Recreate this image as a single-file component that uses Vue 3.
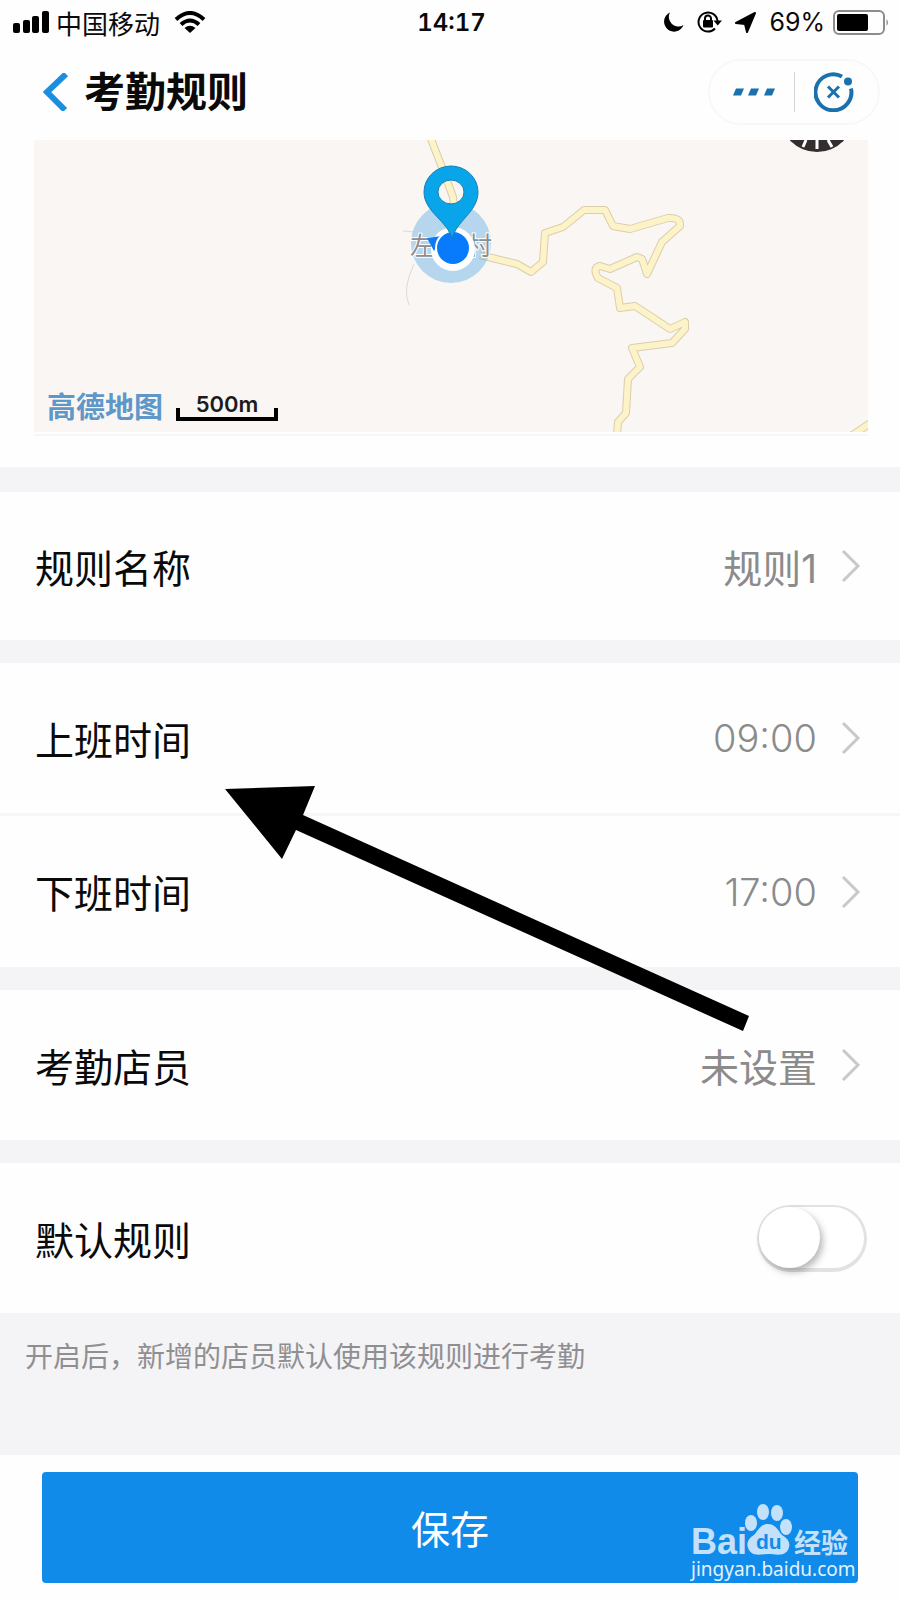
<script setup>
import { ref } from 'vue'

const isDefault = ref(false)
const groups = [
  [{ label: '规则名称', value: '规则1' }],
  [{ label: '上班时间', value: '09:00', time: true }, { label: '下班时间', value: '17:00', time: true }],
  [{ label: '考勤店员', value: '未设置' }],
]
const road =
  'M480 255 L517 264 L531 272 L543 262 L545 233 L563 227 L584 210 L605 210 L613 226 L630 229 L668 218 Q681 217 680 226 L662 242 L647 274 L642 259 L637 257 L610 269 L600 266 Q592 268 598 278 L617 288 L620 308 L635 306 L670 329 L685 322 L685 329 L672 343 L632 348 L640 367 L628 379 L626 413 L618 422 L617 436'
const northRoad = 'M429 134 L443 170 L453 197 L455 215'
const cornerRoad = 'M848 438 L872 422'
</script>

<template>
  <div class="page">
    <div class="status">
      <div class="status-left">
        <svg width="36" height="22" viewBox="0 0 36 22" aria-hidden="true">
          <rect x="0" y="12" width="7" height="10" rx="2" />
          <rect x="10" y="9" width="7" height="13" rx="2" />
          <rect x="19" y="5" width="7" height="17" rx="2" />
          <rect x="29" y="0" width="7" height="22" rx="2" />
        </svg>
        <span class="carrier">中国移动</span>
        <svg class="wifi" width="32" height="22" viewBox="0 0 32 22" aria-hidden="true">
          <g fill="none" stroke="#000" stroke-width="4">
            <path d="M2 8.500 Q16 -4.500 30 8.500" />
            <path d="M7 13.500 Q16 5.500 25 13.500" />
          </g>
          <path d="M10.500 17 Q16 12.500 21.500 17 L16 22 Z" />
        </svg>
      </div>
      <span class="clock">14:17</span>
      <div class="status-right">
        <svg width="20" height="20" viewBox="0 0 20 20" aria-hidden="true">
          <path d="M6 0.500 A10 10 0 1 0 19.500 13 A9.500 9.500 0 0 1 6 0.500 Z" />
        </svg>
        <svg width="25" height="22" viewBox="0 0 25 22" aria-hidden="true">
          <g fill="none" stroke="#000" stroke-width="2">
            <path d="M18 17.500 A9.500 9.500 0 1 1 20.500 10" />
            <path d="M8 10 V7.500 a3 3 0 0 1 6 0 V10" />
          </g>
          <rect x="6" y="9" width="10" height="7.500" rx="1" />
          <path d="M16.500 9.500 H25 L20.700 14.500 Z" />
        </svg>
        <svg width="21" height="21" viewBox="0 0 21 21" aria-hidden="true">
          <path d="M20 1 L12 20 L10 12 L1 11 Z" stroke="#000" stroke-width="2" stroke-linejoin="round" />
        </svg>
        <span class="percent">69%</span>
        <svg width="57" height="25" viewBox="0 0 57 25" aria-hidden="true">
          <rect x="1" y="1" width="50" height="23" rx="5" fill="none" stroke="#8c8c8c" stroke-width="2" />
          <rect x="4" y="4" width="31" height="17" rx="2" />
          <path d="M53.500 9 Q56.500 12.500 53.500 16 Z" fill="#8c8c8c" />
        </svg>
      </div>
    </div>

    <header class="header">
      <button class="back" type="button" aria-label="返回">
        <svg width="26" height="38" viewBox="0 0 26 38" aria-hidden="true">
          <path d="M23 1 L4 19 L22 37" fill="none" stroke="#1a8ee0" stroke-width="6" />
        </svg>
      </button>
      <h1>考勤规则</h1>
      <div class="capsule">
        <button type="button" aria-label="更多">
          <svg width="42" height="8" viewBox="0 0 42 8" fill="#1b70ae" aria-hidden="true">
            <path d="M3 0.500 h8 l-3 7 h-8 Z M18 0.500 h8 l-3 7 h-8 Z M34 0.500 h8 l-3 7 h-8 Z" />
          </svg>
        </button>
        <i class="divider"></i>
        <button type="button" aria-label="关闭">
          <svg width="40" height="40" viewBox="0 0 40 40" fill="none" stroke="#1b70ae" stroke-width="4" aria-hidden="true">
            <path d="M28 4.500 A18 18 0 1 0 37 16.500" />
            <path d="M14 14.500 L25 25.500 M25 14.500 L14 25.500" stroke-width="3" />
            <circle cx="34" cy="9.500" r="4" fill="#1b70ae" stroke="none" />
          </svg>
        </button>
      </div>
    </header>

    <section class="map-section">
      <div class="map">
        <svg class="map-canvas" viewBox="34 140 834 292" preserveAspectRatio="xMidYMid slice" role="img" aria-label="地图">
          <rect x="0" y="140" width="900" height="292" fill="#faf6f3" />
          <path d="M403 231 L414 232 M414 264 Q402 289 409 305" fill="none" stroke="#ded9d7" />
          <g fill="none" stroke-linejoin="round">
            <g stroke="#dccdad" stroke-width="8">
              <path :d="road" /><path :d="northRoad" /><path :d="cornerRoad" />
            </g>
            <g stroke="#fcf3c8" stroke-width="6">
              <path :d="road" /><path :d="northRoad" /><path :d="cornerRoad" />
            </g>
          </g>
          <circle cx="451" cy="243" r="40" fill="#64afe8" fill-opacity="0.45" />
          <g class="place">
            <text x="410" y="255">左</text>
            <text x="467" y="255">村</text>
          </g>
          <circle cx="453" cy="249" r="22" fill="#fff" />
          <path d="M427 238 L442 236 L434 251 Z" fill="#0d7bf5" />
          <circle cx="453" cy="248" r="18" fill="#fff" />
          <circle cx="453" cy="248" r="16" fill="#077bfb" />
          <path
            fill="#08a5ea"
            stroke="#1781b4"
            fill-rule="evenodd"
            d="M452 239 C448 221 424 212 424 192 A27 26 0 0 1 478 192 C478 212 456 221 452 239 Z M438 192 a13 12 0 1 0 26 0 a13 12 0 1 0 -26 0 Z"
          />
          <circle cx="817" cy="115" r="37" fill="#332f2e" />
          <path d="M806 140 L803 147 M817 140 V149 M828 140 L832 147" stroke="#fff" stroke-width="3" />
        </svg>
        <div class="map-legend">
          <span class="brand">高德地图</span>
          <span class="scale">500m</span>
        </div>
      </div>
    </section>

    <main>
      <section v-for="(group, i) in groups" :key="i" class="group">
        <button v-for="item in group" :key="item.label" class="row" type="button">
          <span class="label">{{ item.label }}</span>
          <span class="value" :class="{ time: item.time }">{{ item.value }}</span>
          <svg class="chevron" width="20" height="34" viewBox="0 0 20 34" aria-hidden="true">
            <path d="M2 2 L17 17 L2 32" fill="none" stroke="#c9c9cb" stroke-width="3" />
          </svg>
        </button>
      </section>
      <section class="group">
        <label class="row" for="default-rule">
          <span class="label">默认规则</span>
          <input id="default-rule" v-model="isDefault" class="switch" type="checkbox" role="switch" />
        </label>
      </section>
      <p class="hint">开启后，新增的店员默认使用该规则进行考勤</p>
    </main>

    <footer class="footer">
      <button class="save" type="button">保存</button>
      <svg class="watermark" width="168" height="84" viewBox="0 0 168 84" aria-hidden="true">
        <g fill="#c3e1fa">
          <text class="wm-bai" x="1" y="52">Bai</text>
          <ellipse cx="61" cy="21" rx="6" ry="8" />
          <ellipse cx="73" cy="10" rx="6" ry="8" />
          <ellipse cx="87" cy="11" rx="6" ry="8" />
          <ellipse cx="96" cy="25" rx="6" ry="8" />
          <path d="M78 22 C70 22 68 29 64 33 C57 37 56 43 59 48 C63 55 71 52 78 52 C85 52 94 55 98 48 C101 42 99 37 92 33 C88 29 86 22 78 22 Z" />
          <text class="wm-cn" x="104" y="51">经验</text>
        </g>
        <text class="wm-du" x="66" y="47" fill="#108bea">du</text>
        <text class="wm-url" x="1" y="74" fill="#e3f2fe">jingyan.baidu.com</text>
      </svg>
    </footer>

    <svg class="pointer" width="524" height="247" viewBox="225 785 524 247" aria-hidden="true">
      <path d="M225 789 L315 786 L303 815 L749 1016 L743 1031 L296 830 L282 859 Z" />
    </svg>
  </div>
</template>

<style>
body {
  margin: 0;
  background: #fff;
}
</style>

<style scoped>
.page {
  position: relative;
  background: #fefefe;
  color: #0a0a0a;
  font-family: Inter, "Noto Sans CJK SC", sans-serif;
}
button {
  margin: 0;
  padding: 0;
  border: 0;
  background: none;
  color: inherit;
  font: inherit;
  cursor: pointer;
}
svg {
  display: block;
  flex: none;
}
.status {
  display: grid;
  grid-template-columns: 1fr auto 1fr;
  align-items: center;
  height: 44px;
  padding: 0 10px 0 13px;
}
.status-left,
.status-right {
  display: flex;
  align-items: center;
}
.carrier {
  margin-left: 7px;
  font-size: 26px;
}
.wifi {
  margin-left: 14px;
}
.clock {
  font-size: 24px;
  font-weight: 600;
  font-variant-numeric: tabular-nums;
}
.status-right {
  justify-content: flex-end;
  gap: 13px;
}
.percent {
  margin-right: -5px;
  font-size: 25px;
}
.header {
  display: flex;
  align-items: center;
  height: 96px;
  padding: 0 20px 0 43px;
}
h1 {
  flex: 1;
  margin: 0 0 0 15px;
  font-size: 41px;
  line-height: 60px;
  font-weight: 700;
}
.capsule {
  display: flex;
  align-items: center;
  box-sizing: border-box;
  width: 172px;
  height: 66px;
  padding: 0 4px;
  border: 2px solid #f8f8f8;
  border-radius: 33px;
}
.capsule button {
  display: flex;
  flex: 1;
  justify-content: center;
}
.divider {
  width: 1px;
  height: 40px;
  background: #d4d4d4;
}
.map-section {
  padding: 0 32px 31px 34px;
}
.map {
  position: relative;
  padding-bottom: 2px;
  border-bottom: 2px solid #f7f5f5;
}
.map-canvas {
  width: 100%;
  height: 292px;
}
.place {
  fill: #8b8d90;
  stroke: #fff;
  stroke-width: 2px;
  paint-order: stroke;
  font-size: 25px;
}
.map-legend {
  position: absolute;
  left: 13px;
  bottom: 13px;
  display: flex;
  align-items: flex-end;
  gap: 13px;
}
.brand {
  color: #5f97c8;
  font-size: 29px;
  line-height: 26px;
  font-weight: 700;
}
.scale {
  position: relative;
  box-sizing: border-box;
  width: 102px;
  height: 30px;
  border-bottom: 4px solid #000;
  color: #1c1c1c;
  font-size: 22px;
  font-weight: 600;
  line-height: 26px;
  text-align: center;
}
.scale::after {
  content: "";
  position: absolute;
  inset: auto 0 0;
  height: 9px;
  border: solid #000;
  border-width: 0 4px;
}
.group {
  border-top: 23px solid #f4f4f6;
}
.group:first-child {
  border-top-width: 25px;
}
.row {
  display: flex;
  align-items: center;
  box-sizing: border-box;
  width: 100%;
  height: 150px;
  padding: 0 33px 0 35px;
  text-align: left;
}
.group:first-child .row {
  height: 148px;
}
.row + .row {
  height: 154px;
  border-top: 3px solid #f6f6f7;
}
.label {
  flex: 1;
  padding-bottom: 1px;
  font-size: 39px;
}
.value {
  padding-bottom: 1px;
  color: #8b8b8b;
  font-size: 39px;
}
.time {
  padding-bottom: 0;
  font-size: 38px;
  font-weight: 300;
}
.chevron {
  margin: 0 6px 0 24px;
}
.switch {
  appearance: none;
  box-sizing: border-box;
  width: 110px;
  height: 67px;
  margin: 0;
  border: 2px solid #e2e2e3;
  border-right-width: 3px;
  border-bottom-width: 4px;
  border-radius: 34px;
  background: #fff;
  cursor: pointer;
}
.switch::before {
  content: "";
  display: block;
  width: 61px;
  height: 61px;
  border-radius: 50%;
  background: #fff;
  box-shadow: 3px 4px 7px rgb(0 0 0 / 28%);
}
.switch:checked {
  background: #108bea;
}
.switch:checked::before {
  margin-left: auto;
}
.hint {
  box-sizing: border-box;
  min-height: 142px;
  margin: 0;
  padding: 24px 25px;
  background: #f4f3f6;
  color: #8f8f92;
  font-size: 28px;
  line-height: 40px;
}
.footer {
  position: relative;
  padding: 17px 42px;
}
.save {
  display: block;
  width: 100%;
  height: 111px;
  padding-bottom: 2px;
  border-radius: 4px;
  background: #108bea;
  color: #fff;
  font-size: 39px;
}
.watermark {
  position: absolute;
  right: 42px;
  bottom: 14px;
}
.wm-bai {
  font: 700 36px "Liberation Sans", sans-serif;
}
.wm-du {
  font: 700 21px "Liberation Sans", sans-serif;
}
.wm-cn {
  font-size: 27px;
  font-weight: 700;
}
.wm-url {
  font: 19px "Noto Sans", sans-serif;
}
.pointer {
  position: absolute;
  left: 225px;
  top: 785px;
  pointer-events: none;
}
</style>
